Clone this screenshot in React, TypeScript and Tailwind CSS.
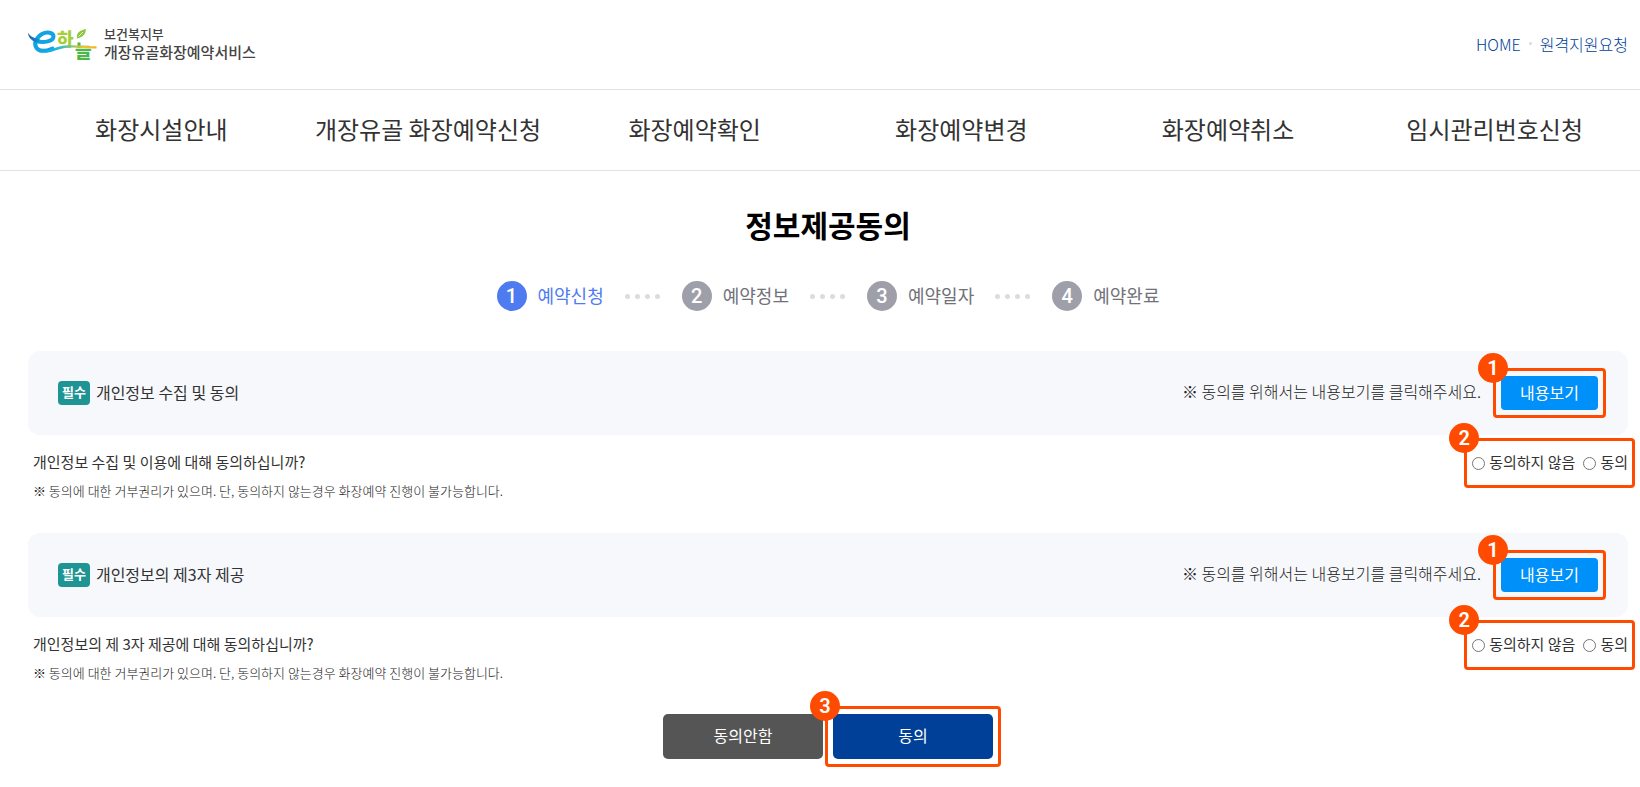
import type { ReactNode } from 'react';

const NAV_ITEMS = [
  '화장시설안내',
  '개장유골 화장예약신청',
  '화장예약확인',
  '화장예약변경',
  '화장예약취소',
  '임시관리번호신청',
];

const STEPS = ['예약신청', '예약정보', '예약일자', '예약완료'];

const CONSENTS = [
  {
    id: 'collect',
    title: '개인정보 수집 및 동의',
    question: '개인정보 수집 및 이용에 대해 동의하십니까?',
  },
  {
    id: 'third-party',
    title: '개인정보의 제3자 제공',
    question: '개인정보의 제 3자 제공에 대해 동의하십니까?',
  },
];

function Logo() {
  return (
    <svg className="h-[34px] w-[70px] overflow-visible" viewBox="0 0 70 34" aria-hidden="true">
      <defs>
        <linearGradient id="swoosh" gradientUnits="userSpaceOnUse" x1="0" y1="0" x2="70" y2="0">
          <stop offset="0" stopColor="#0f9be0" />
          <stop offset="0.4" stopColor="#19b5e8" />
          <stop offset="0.62" stopColor="#7cc47f" />
          <stop offset="0.8" stopColor="#f5c22b" />
          <stop offset="1" stopColor="#f5b21b" />
        </linearGradient>
        <linearGradient id="tail" gradientUnits="userSpaceOnUse" x1="0" y1="4" x2="16" y2="14">
          <stop offset="0" stopColor="#1a4f9c" />
          <stop offset="1" stopColor="#12a3e4" />
        </linearGradient>
      </defs>
      <text x="30" y="18" fontSize="18" fontWeight="900" fill="#a6ce39" fontFamily="'Noto Sans CJK KR', sans-serif">하</text>
      <text x="48" y="30" fontSize="18" fontWeight="900" fill="#4db748" fontFamily="'Noto Sans CJK KR', sans-serif">늘</text>
      <path
        d="M9 13 C17 15.500 26.500 13 26.500 8.500 C26.500 4.500 20 3.200 15 6 C9 9.500 6.500 16 9.500 20 C12.500 24 19.500 23 25.500 20.500"
        fill="none"
        stroke="#12a3e4"
        strokeWidth="4"
        strokeLinecap="round"
      />
      <path d="M0.800 4.500 C3 8.500 7 10.200 13 11.500 L11 15 C5.500 13.800 1.500 10 0.800 4.500Z" fill="url(#tail)" />
      <path d="M11 23 C20 25.500 27 18 40 17.200 C52 16.800 60 18.500 69.500 18.300 L69.500 20.500 C60 20.800 52 19.200 41 19.700 C29 20.200 22 28 11 23Z" fill="url(#swoosh)" />
      <path d="M50 10.500 C49 5 53 2 59 1 C58.500 6.500 55.500 9.500 50 10.500Z" fill="#8cc63f" />
      <path d="M51.500 8.500 L56 4" stroke="#fff" strokeWidth="0.8" />
    </svg>
  );
}

function Callout({
  number,
  boxClass,
  children,
}: {
  number: number;
  boxClass: string;
  children: ReactNode;
}) {
  return (
    <div className="relative">
      {children}
      <div className={`pointer-events-none absolute rounded-[4px] border-[3px] border-[#ff4b00] ${boxClass}`}>
        <span className="absolute -top-[18px] -left-[18px] flex size-[30px] items-center justify-center rounded-full bg-[#ff4b00] font-[Roboto] text-xl leading-none font-semibold text-white">
          {number}
        </span>
      </div>
    </div>
  );
}

function Steps() {
  return (
    <ol className="flex items-center justify-center">
      {STEPS.map((step, i) => (
        <li key={step} className={i === 0 ? 'flex items-center text-[#4e7cf0]' : 'flex items-center text-[#71717a]'}>
          {i > 0 && (
            <span className="mr-[22px] ml-[21px] flex gap-[5px]" aria-hidden="true">
              {[0, 1, 2, 3].map((dot) => (
                <span key={dot} className="size-[5px] rounded-full bg-[#dcdcdc]" />
              ))}
            </span>
          )}
          <span
            className={`flex size-[30px] items-center justify-center rounded-full font-[Roboto] text-xl leading-none font-medium text-white ${
              i === 0 ? 'bg-[#4e7cf0]' : 'bg-[#9f9faa]'
            }`}
          >
            {i + 1}
          </span>
          <span className="ml-[11px] pb-0.5 text-lg leading-7">{step}</span>
        </li>
      ))}
    </ol>
  );
}

function Consent({ id, title, question }: { id: string; title: string; question: string }) {
  return (
    <section>
      <div className="flex h-[84px] items-center justify-between rounded-xl bg-[#f7f8fc] px-[30px]">
        <h2 className="flex items-center gap-1.5 text-base leading-6 text-[#333]">
          <span className="rounded-[4px] bg-[#1f9494] px-1 pb-0.5 text-[13px] leading-[22px] font-bold text-white">필수</span>
          <span className="pb-0.5">{title}</span>
        </h2>
        <div className="flex items-center gap-5">
          <p className="pb-1 text-base leading-6 font-light text-[#222]">※ 동의를 위해서는 내용보기를 클릭해주세요.</p>
          <Callout number={1} boxClass="-inset-2">
            <button type="button" className="block h-[34px] w-[97px] rounded-[4px] bg-[#0090f9] pb-0.5 text-base leading-none text-white">
              내용보기
            </button>
          </Callout>
        </div>
      </div>
      <div className="flex items-start justify-between pt-4 pl-[5px]">
        <div>
          <p className="pb-0.5 text-[15px] leading-[22px] text-[#333]">{question}</p>
          <p className="mt-1.5 pb-0.5 text-[13px] leading-5 font-light text-[#222]">
            ※ 동의에 대한 거부권리가 있으며. 단, 동의하지 않는경우 화장예약 진행이 불가능합니다.
          </p>
        </div>
        <Callout number={2} boxClass="-top-[13px] -right-[7px] -bottom-[13px] -left-2">
          <div role="radiogroup" aria-label={question} className="flex gap-2 text-[15px] text-[#333]">
            <label className="flex items-center gap-1">
              <input type="radio" name={id} value="no" className="size-[13px]" />
              <span className="pb-0.5 leading-[22px]">동의하지 않음</span>
            </label>
            <label className="flex items-center gap-1">
              <input type="radio" name={id} value="yes" className="size-[13px]" />
              <span className="pb-0.5 leading-[22px]">동의</span>
            </label>
          </div>
        </Callout>
      </div>
    </section>
  );
}

export default function App() {
  return (
    <div className="bg-white font-['Noto_Sans_CJK_KR',sans-serif] text-[#333]">
      <header>
        <div className="flex h-[90px] items-center justify-between border-b border-[#e2e2e2] pr-3 pl-[27px]">
          <a href="#home" className="flex items-center gap-[7px] text-[#444]">
            <Logo />
            <span className="flex flex-col pb-1">
              <span className="text-[13px] leading-[18px] font-medium">보건복지부</span>
              <span className="text-[15px] leading-[18px] font-medium">개장유골화장예약서비스</span>
            </span>
          </a>
          <div className="flex items-center gap-2 pb-0.5 text-base leading-6 font-light text-[#00419a]">
            <a href="#home">HOME</a>
            <span className="size-[3px] rounded-full bg-[#dcdcdc]" aria-hidden="true" />
            <a href="#support">원격지원요청</a>
          </div>
        </div>
        <nav className="border-b border-[#dfe2e8] pr-3 pl-7">
          <ul className="grid h-20 grid-cols-6 items-center pb-[3px] text-center text-2xl">
            {NAV_ITEMS.map((item) => (
              <li key={item}>
                <a href="#menu" className="whitespace-nowrap">
                  {item}
                </a>
              </li>
            ))}
          </ul>
        </nav>
      </header>
      <main className="pt-[31px] pr-3 pb-7 pl-7">
        <h1 className="text-center text-[30px] leading-[44px] font-bold text-black">정보제공동의</h1>
        <div className="mt-[35px] mb-10">
          <Steps />
        </div>
        <div className="flex flex-col gap-[30px]">
          {CONSENTS.map((consent) => (
            <Consent key={consent.id} {...consent} />
          ))}
        </div>
        <div className="mt-[29px] flex justify-center gap-2.5 text-base">
          <button type="button" className="h-[45px] w-40 rounded-[5px] bg-[#555] pb-1 leading-none text-white">
            동의안함
          </button>
          <Callout number={3} boxClass="-inset-2">
            <button type="button" className="block h-[45px] w-40 rounded-[5px] bg-[#004098] pb-1 leading-none text-white">
              동의
            </button>
          </Callout>
        </div>
      </main>
    </div>
  );
}
